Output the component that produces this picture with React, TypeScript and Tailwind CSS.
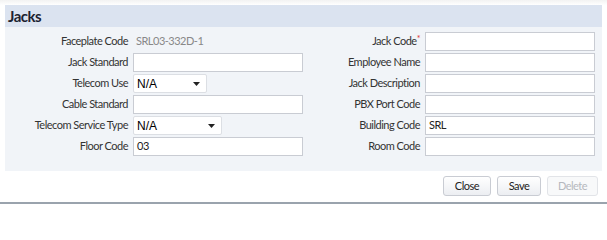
const leftRows = [
  { label: 'Faceplate Code', kind: 'static', value: 'SRL03-332D-1' },
  { label: 'Jack Standard', kind: 'input', value: '' },
  { label: 'Telecom Use', kind: 'select', value: 'N/A', width: 'w-[74px]' },
  { label: 'Cable Standard', kind: 'input', value: '' },
  { label: 'Telecom Service Type', kind: 'select', value: 'N/A', width: 'w-[89px]' },
  { label: 'Floor Code', kind: 'input', value: '03' },
]

const rightRows = [
  { label: 'Jack Code', required: true, value: '' },
  { label: 'Employee Name', value: '' },
  { label: 'Jack Description', value: '' },
  { label: 'PBX Port Code', value: '' },
  { label: 'Building Code', value: 'SRL' },
  { label: 'Room Code', value: '' },
]

function TextBox({ value }: { value: string }) {
  return (
    <div className="w-[170px] h-[19px] bg-white border border-[#c9ccd3] px-[3px] flex items-center text-[11px] text-[#222]">
      {value}
    </div>
  )
}

function SelectBox({ value, width }: { value: string; width: string }) {
  return (
    <div className={`${width} h-[19px] bg-white border border-[#dcdfe4] rounded-[2px] pl-[3px] pr-[6px] flex items-center justify-between text-[12px] tracking-normal text-black font-['Liberation_Sans',sans-serif]`}>
      <span>{value}</span>
      <svg width="7" height="4" viewBox="0 0 7 4">
        <path d="M0 0h7L3.5 4z" fill="#222" />
      </svg>
    </div>
  )
}

export default function App() {
  return (
    <div className="w-[607px] h-[204px] bg-white relative overflow-hidden font-['Lato',sans-serif] tracking-[-0.5px]">
      <div className="h-[5px] bg-gradient-to-b from-[#f2f2f2] to-white" />
      <div className="ml-[5px] mr-[5px] bg-[#f1f4f8]">
        <div className="h-[22px] bg-[#dbe3f0] pl-[3px] flex items-center text-[15px] font-bold text-[#1c2230]">
          Jacks
        </div>
        <div className="flex pt-[5px] pb-[15px]">
          <div className="flex flex-col gap-[2px]">
            {leftRows.map(r => (
              <div key={r.label} className="flex items-center h-[19px]">
                <div className="w-[128px] pr-[5px] text-right text-[11px] text-[#333]">{r.label}</div>
                {r.kind === 'static' && (
                  <div className="pl-[3px] text-[11px] text-[#888]">{r.value}</div>
                )}
                {r.kind === 'input' && <TextBox value={r.value} />}
                {r.kind === 'select' && <SelectBox value={r.value} width={r.width!} />}
              </div>
            ))}
          </div>
          <div className="flex flex-col gap-[2px]">
            {rightRows.map(r => (
              <div key={r.label} className="flex items-center h-[19px]">
                <div className="w-[122px] pr-[5px] text-right text-[11px] text-[#333]">
                  {r.label}
                  {r.required && <span className="text-[#d33] relative top-[-3px] text-[9px]">*</span>}
                </div>
                <TextBox value={r.value} />
              </div>
            ))}
          </div>
        </div>
      </div>
      <div className="flex justify-end gap-[6px] pr-[9px] pt-[5px]">
        <button className="w-[48px] h-[20px] rounded-[3px] border border-[#c9ccd3] bg-gradient-to-b from-white to-[#eceef2] text-[11px] text-[#222]">Close</button>
        <button className="w-[44px] h-[20px] rounded-[3px] border border-[#c9ccd3] bg-gradient-to-b from-white to-[#eceef2] text-[11px] text-[#222]">Save</button>
        <button className="w-[51px] h-[20px] rounded-[3px] border border-[#e2e4e8] bg-[#f8f9fa] text-[11px] text-[#b5b8be]">Delete</button>
      </div>
      <div className="absolute left-0 right-0 bottom-0 h-[2px] bg-[#9aa3ad]" />
    </div>
  )
}
